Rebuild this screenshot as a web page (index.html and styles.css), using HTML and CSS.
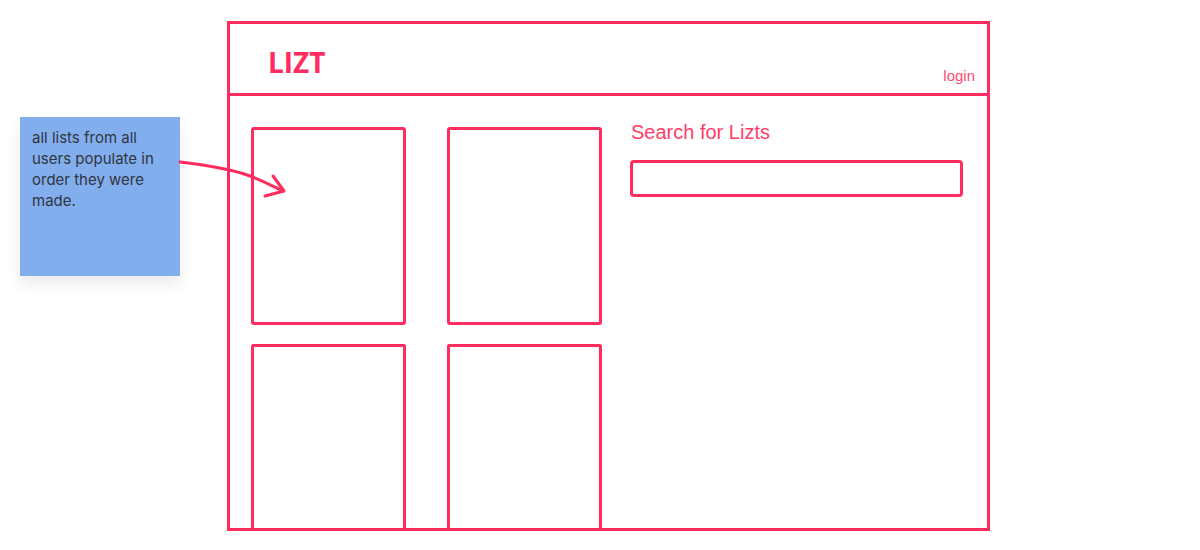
FILE: index.html
```html
<!DOCTYPE html>
<html>
<head>
<meta charset="utf-8">
<title>LIZT wireframe</title>
<link rel="stylesheet" href="styles.css">
</head>
<body>
<div class="canvas">
  <div class="frame">
    <header class="header">
      <div class="logo">LIZT</div>
      <div class="login">login</div>
    </header>
    <main class="main">
      <div class="cards">
        <div class="card"></div>
        <div class="card"></div>
        <div class="card card-last"></div>
        <div class="card card-last"></div>
      </div>
      <section class="search">
        <div class="search-title">Search for Lizts</div>
        <div class="search-box"></div>
      </section>
    </main>
  </div>

  <div class="note">all lists from all users populate in order they were made.</div>

  <svg class="arrow" width="1200" height="550" viewBox="0 0 1200 550">
    <path d="M180 162 C 205 165, 232 169, 250 176 S 274 187, 283 191" />
    <path d="M273 176 L 284 191 L 265 196" />
  </svg>
</div>
</body>
</html>
```

FILE: styles.css
```css
* { box-sizing: border-box; }

html, body {
  margin: 0;
  padding: 0;
  background: #ffffff;
}

.canvas {
  position: relative;
  width: 1200px;
  height: 550px;
  padding: 21px 0 0 227px;
  overflow: hidden;
}

.frame {
  width: 763px;
  height: 510px;
  border: 3px solid #ff2d5f;
  display: flex;
  flex-direction: column;
}

.header {
  height: 72px;
  border-bottom: 3px solid #ff2d5f;
  display: flex;
  justify-content: space-between;
  align-items: flex-start;
  padding: 0 12px 0 38px;
  flex: none;
}

.logo {
  font-family: "Open Sans", "Noto Sans", sans-serif;
  font-weight: 700;
  font-size: 28px;
  line-height: 32px;
  color: #ff2d5f;
  margin-top: 22px;
}

.login {
  font-family: "Liberation Sans", Arial, sans-serif;
  font-size: 15px;
  line-height: 18px;
  color: #ff4a73;
  margin-top: 43px;
}

.main {
  flex: 1;
  display: flex;
  align-items: stretch;
  min-height: 0;
}

.cards {
  display: grid;
  grid-template-columns: 155px 155px;
  grid-template-rows: 198px 1fr;
  column-gap: 41px;
  row-gap: 19px;
  padding: 31px 0 0 21px;
}

.card {
  border: 3px solid #ff2d5f;
  border-radius: 3px;
}

.card-last {
  border-bottom: none;
  border-radius: 3px 3px 0 0;
}

.search {
  margin-left: 28px;
  padding-top: 25px;
  display: flex;
  flex-direction: column;
}

.search-title {
  font-family: "Liberation Sans", Arial, sans-serif;
  font-size: 20px;
  line-height: 22px;
  color: #ff3d68;
  padding-left: 1px;
}

.search-box {
  margin-top: 17px;
  width: 333px;
  height: 37px;
  border: 3px solid #ff2d5f;
  border-radius: 4px;
}

.note {
  position: absolute;
  left: 20px;
  top: 117px;
  width: 160px;
  height: 159px;
  background: #83aeee;
  padding: 10px 10px 0 12px;
  font-family: "Inter", "Liberation Sans", sans-serif;
  font-size: 15px;
  line-height: 21px;
  color: #2f3541;
  box-shadow: 0 8px 14px rgba(0, 0, 0, 0.08);
}

.arrow {
  position: absolute;
  left: 0;
  top: 0;
  pointer-events: none;
}

.arrow path {
  fill: none;
  stroke: #ff2d5f;
  stroke-width: 3;
  stroke-linecap: round;
  stroke-linejoin: round;
}
```
